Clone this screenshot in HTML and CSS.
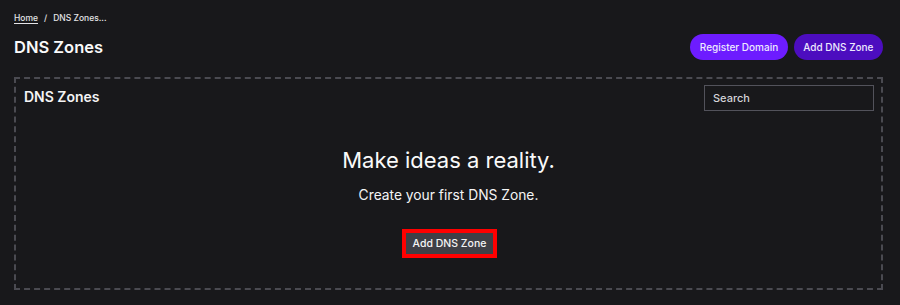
FILE: index.html
```html
<!DOCTYPE html>
<html>
<head>
<meta charset="utf-8">
<link rel="stylesheet" href="styles.css">
</head>
<body>
<div class="page">
  <nav class="crumbs"><a class="crumb-link">Home</a><span class="sep">/</span><span>DNS Zones...</span></nav>
  <header class="head">
    <h1 class="title">DNS Zones</h1>
    <div class="actions">
      <button class="pill pill-bright">Register Domain</button>
      <button class="pill pill-dark">Add DNS Zone</button>
    </div>
  </header>
  <section class="panel">
    <div class="panel-top">
      <h2 class="panel-title">DNS Zones</h2>
      <input class="search" placeholder="Search">
    </div>
    <div class="empty">
      <p class="empty-title">Make ideas a reality.</p>
      <p class="empty-sub">Create your first DNS Zone.</p>
      <div class="focus-ring"><button class="btn-gray">Add DNS Zone</button></div>
    </div>
  </section>
</div>
</body>
</html>
```
FILE: styles.css
```css
* { box-sizing: border-box; }
html, body { margin: 0; background: #18181b; }
body { font-family: Inter, "Noto Sans", sans-serif; color: #f4f4f5; }
.page { padding: 12px 14px 0 14px; }
.crumbs { font-size: 8.5px; font-weight: 500; color: #e4e4e7; display: flex; align-items: center; height: 12px; }
.crumb-link { text-decoration: underline; text-underline-offset: 2px; color: #e4e4e7; }
.sep { margin: 0 6px; }
.head { display: flex; justify-content: space-between; align-items: center; margin-top: 10px; height: 26px; }
.title { margin: 0; font-size: 16.5px; font-weight: 600; color: #fafafa; }
.actions { display: flex; gap: 6px; margin-right: 3px; }
.pill { border: none; border-radius: 13px; height: 26px; padding: 0 9.5px; font-family: inherit; font-size: 10px; font-weight: 500; color: #ede9fe; }
.pill-bright { background: #6d1cff; }
.pill-dark { background: #4c0dbf; }
.panel { margin-top: 17px; width: 869px; height: 213px; border: 2px dashed #4a4a51; display: flex; flex-direction: column; }
.panel-top { display: flex; justify-content: space-between; align-items: flex-start; padding: 6px 7px 0 8px; }
.panel-title { margin: 3px 0 0 0; font-size: 14px; font-weight: 600; color: #f4f4f5; }
.search { width: 170px; height: 26px; background: transparent; border: 1px solid #52525b; color: #e4e4e7; font-family: inherit; font-size: 11px; font-weight: 500; padding: 0 8px; outline: none; }
.search::placeholder { color: #d4d4d8; }
.empty { display: flex; flex-direction: column; align-items: center; margin-top: 36px; }
.empty-title { margin: 0; font-size: 22px; font-weight: 400; color: #fafafa; }
.empty-sub { margin: 14px 0 0 0; font-size: 13.8px; color: #f4f4f5; }
.focus-ring { margin-top: 26px; margin-left: 2px; border: 4px solid #ff0000; }
.btn-gray { display: block; border: none; background: #3f3f46; color: #f4f4f5; font-family: inherit; font-size: 10.5px; font-weight: 500; height: 21px; padding: 0 7px; }
```
